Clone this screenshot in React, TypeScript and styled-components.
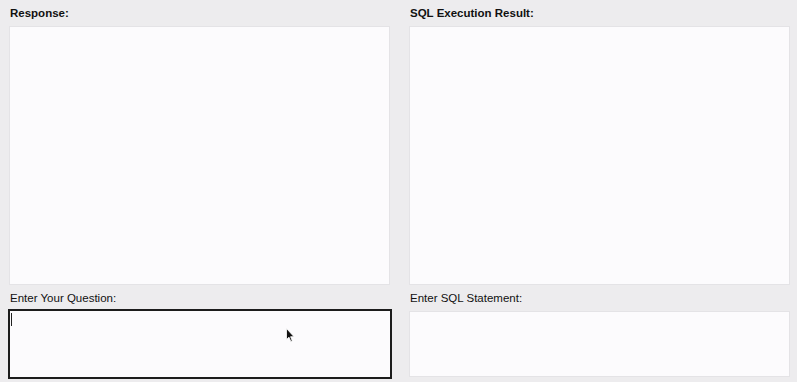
import React from 'react';
import styled, { createGlobalStyle } from 'styled-components';

const GlobalStyle = createGlobalStyle`
  html, body {
    margin: 0;
    padding: 0;
    background: #edecee;
    font-family: "Liberation Sans", Arial, sans-serif;
  }
`;

const Page = styled.div`
  width: 797px;
  height: 382px;
  box-sizing: border-box;
  padding: 6px 7px 0 9px;
  display: grid;
  grid-template-columns: 381px 381px;
  column-gap: 19px;
  position: relative;
  overflow: hidden;
`;

const Column = styled.div`
  display: flex;
  flex-direction: column;
`;

const Label = styled.div<{ $bold?: boolean }>`
  font-size: 11.5px;
  line-height: 14px;
  color: #111;
  font-weight: ${(p) => (p.$bold ? 700 : 400)};
  padding-left: 1px;
  margin-bottom: ${(p) => (p.$bold ? '6px' : '6px')};
  margin-top: ${(p) => (p.$bold ? '0' : '6px')};
`;

const OutputBox = styled.div`
  height: 259px;
  box-sizing: border-box;
  background: #fcfbfd;
  border: 1px solid #e4e3e6;
`;

const InputBox = styled.div<{ $focused?: boolean }>`
  position: relative;
  height: 66px;
  box-sizing: border-box;
  background: #fcfbfd;
  border: 1px solid #e4e3e6;
  ${(p) => p.$focused && `
    height: 70px;
    margin: -2px -2px 0 -1px;
    border: 2px solid #1c1c1c;
  `}
`;

const Caret = styled.span`
  position: absolute;
  left: 1px;
  top: 2px;
  width: 1px;
  height: 13px;
  background: #222;
`;

const Pointer = styled.svg`
  position: absolute;
  left: 286px;
  top: 328px;
`;

export default function App() {
  return (
    <>
      <GlobalStyle />
      <Page>
        <Column>
          <Label $bold>Response:</Label>
          <OutputBox />
          <Label>Enter Your Question:</Label>
          <InputBox $focused>
            <Caret />
          </InputBox>
        </Column>
        <Column>
          <Label $bold>SQL Execution Result:</Label>
          <OutputBox />
          <Label>Enter SQL Statement:</Label>
          <InputBox />
        </Column>
        <Pointer width="9" height="15" viewBox="0 0 9 15">
          <path d="M0.5 0.5 L0.5 11.5 L3 9.2 L4.8 13.5 L6.3 12.9 L4.6 8.7 L8 8.7 Z" fill="#111" stroke="#fff" strokeWidth="0.8" />
        </Pointer>
      </Page>
    </>
  );
}
